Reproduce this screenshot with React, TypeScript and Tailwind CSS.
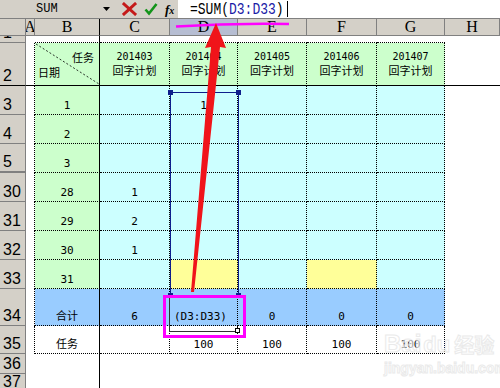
import clsx from 'clsx';

const GRID = 'grid grid-cols-[26px_9px_65px_70px_68px_69px_70px_68px_55px]';
const CELL_FONT = "font-['DejaVu_Sans_Mono','Noto_Sans_CJK_SC',monospace]";

type Kind = 'top' | 'head' | 'body' | 'total' | 'task' | 'empty';

type RowSpec = {
  n: string;
  h: string;
  kind: Kind;
  vals?: string[];
  yellow?: number[];
  gap?: boolean;
  active?: boolean;
};

const ROWS: RowSpec[] = [
  { n: '1', h: 'h-[7px]', kind: 'top' },
  { n: '2', h: 'h-[43px]', kind: 'head' },
  { n: '3', h: 'h-[29px]', kind: 'body', vals: ['1', '', '1', '', '', ''] },
  { n: '4', h: 'h-[29px]', kind: 'body', vals: ['2', '', '', '', '', ''] },
  { n: '5', h: 'h-[29px]', kind: 'body', vals: ['3', '', '', '', '', ''], gap: true },
  { n: '30', h: 'h-[29px]', kind: 'body', vals: ['28', '1', '', '', '', ''] },
  { n: '31', h: 'h-[29px]', kind: 'body', vals: ['29', '2', '', '', '', ''] },
  { n: '32', h: 'h-[29px]', kind: 'body', vals: ['30', '1', '', '', '', ''] },
  { n: '33', h: 'h-[29px]', kind: 'body', vals: ['31', '', '', '', '', ''], yellow: [2, 4] },
  { n: '34', h: 'h-[37px]', kind: 'total', vals: ['合计', '6', '(D3:D33)', '0', '0', '0'], active: true },
  { n: '35', h: 'h-[28px]', kind: 'task', vals: ['任务', '', '100', '100', '100', '100'] },
  { n: '36', h: 'h-[20px]', kind: 'empty' },
  { n: '37', h: 'flex-1', kind: 'empty' },
];

const MONTHS = ['201403', '201404', '201405', '201406', '201407'];

function FormulaBar() {
  return (
    <div className="h-[21px] flex bg-[#d4d0c8] border-b border-[#808080]">
      <div className="w-[118px] flex items-center justify-between pl-[36px] pr-[8px]">
        <span className="font-['Liberation_Mono',monospace] text-[12px] text-black">SUM</span>
        <svg width="7" height="4" viewBox="0 0 7 4">
          <path d="M0 0h7L3.5 4z" fill="#000" />
        </svg>
      </div>
      <div className="flex items-center gap-[7px] w-[60px] pl-[4px]">
        <svg width="15" height="14" viewBox="0 0 15 14">
          <path d="M2 2l11 10M13 2L2 12" stroke="#c41a1a" strokeWidth="3" strokeLinecap="square" />
        </svg>
        <svg width="14" height="14" viewBox="0 0 14 14">
          <path d="M1.5 7.5l3.5 4L12.5 2" stroke="#13941a" strokeWidth="2.6" fill="none" />
        </svg>
        <span className="font-['Liberation_Serif'] italic font-bold text-[13px] leading-none text-black">
          f<span className="text-[10px]">x</span>
        </span>
      </div>
      <div className="flex-1 bg-white flex items-center pl-[12px] font-['Liberation_Mono',monospace] text-[13px] leading-none">
        <span className="inline-block scale-y-[1.3]">
          <span className="text-black">=SUM(</span>
          <span className="text-[#1a1aa6]">D3:D33</span>
          <span className="text-black">)</span>
        </span>
        <span className="ml-[3px] w-px h-[16px] bg-black" />
      </div>
    </div>
  );
}

function ColHeader() {
  const letters = ['', 'A', 'B', 'C', 'D', 'E', 'F', 'G', 'H'];
  return (
    <div className={clsx(GRID, 'h-[21px] bg-[#d4d0c8]')}>
      {letters.map((l, i) => (
        <div
          key={i}
          className={clsx(
            "flex items-center justify-center border-r border-b border-[#808080] font-['Liberation_Serif'] text-[16px] leading-none text-black overflow-hidden",
            i === 2 && 'border-r-black',
            i === 4 && 'bg-[#b6bdd2] border-[#1f2a7a]'
          )}
        >
          {l}
        </div>
      ))}
    </div>
  );
}

function HeadCorner() {
  return (
    <>
      <svg className="absolute left-0 top-0" width="65" height="42" viewBox="0 0 65 42">
        <line x1="1" y1="1" x2="64" y2="41" stroke="#000" strokeWidth="0.8" strokeDasharray="2 2" />
      </svg>
      <span className="absolute right-[5px] top-[10px] text-[11px] leading-none whitespace-nowrap">任务</span>
      <span className="absolute left-[3px] top-[25px] text-[11px] leading-none whitespace-nowrap">日期</span>
    </>
  );
}

function Row({ r }: { r: RowSpec }) {
  const inTable = r.kind !== 'top' && r.kind !== 'empty';
  const isHead = r.kind === 'head';

  const cellBg = (ci: number) => {
    if (r.kind === 'head') return 'bg-[#ccffcc]';
    if (r.kind === 'body') {
      if (r.yellow?.includes(ci)) return 'bg-[#ffff99]';
      return ci === 0 ? 'bg-[#ccffcc]' : 'bg-[#ccffff]';
    }
    if (r.kind === 'total') return 'bg-[#99ccff]';
    return 'bg-white';
  };

  return (
    <div className={clsx(GRID, r.h, CELL_FONT, 'text-black')}>
      <div
        className={clsx(
          "flex items-end pl-[3px] pb-[1px] bg-[#d4d0c8] border-r border-b border-[#808080] font-['Liberation_Sans'] text-[16px] leading-none overflow-hidden",
          isHead && 'border-b-black',
          r.gap && 'border-b-2',
          r.active && 'bg-[#b6bdd2] border-[#1f2a7a]'
        )}
      >
        {r.n}
      </div>
      <div
        className={clsx(
          'bg-white',
          inTable && 'border-r border-dotted border-black',
          isHead && 'border-b [border-bottom-style:solid]'
        )}
      />
      {[0, 1, 2, 3, 4, 5].map((ci) => {
        const v = r.vals?.[ci] ?? '';
        return (
          <div
            key={ci}
            className={clsx(
              'relative flex text-[11px] leading-none overflow-hidden',
              inTable && ['border-r border-b border-dotted border-black', cellBg(ci)],
              r.kind === 'top' && 'border-b border-dotted border-black',
              ci === 0 && 'border-r border-r-black [border-right-style:solid]',
              isHead && '[border-bottom-style:solid]',
              isHead ? 'flex-col items-center justify-center gap-[4px]' : 'items-end pb-[3px]',
              r.kind === 'total' && ci === 2 ? 'justify-start pl-[4px] text-[10px]' : 'justify-center'
            )}
          >
            {isHead ? (
              ci === 0 ? (
                <HeadCorner />
              ) : (
                <>
                  <span className="text-[10px]">{MONTHS[ci - 1]}</span>
                  <span>回字计划</span>
                </>
              )
            ) : (
              v
            )}
          </div>
        );
      })}
      <div className={clsx('bg-white', isHead && 'border-b border-black')} />
    </div>
  );
}

function Overlays() {
  return (
    <>
      <div className="absolute left-[170px] top-[92px] w-[69px] h-[204px] border border-[#0f1f8c]" />
      <div className="absolute left-[168px] top-[90px] w-[5px] h-[5px] bg-[#0f1f8c]" />
      <div className="absolute left-[236px] top-[90px] w-[5px] h-[5px] bg-[#0f1f8c]" />
      <div className="absolute left-[168px] top-[293px] w-[5px] h-[5px] bg-[#0f1f8c]" />
      <div className="absolute left-[236px] top-[293px] w-[5px] h-[5px] bg-[#0f1f8c]" />
      <div className="absolute left-[169px] top-[296px] w-[70px] h-[36px] border-l border-b border-[#333]" />
      <div className="absolute left-[235px] top-[328px] w-[5px] h-[5px] bg-white border border-black" />
      <div className="absolute left-[163px] top-[295px] w-[83px] h-[43px] border-[3px] border-[#ff00ff]" />
      <svg className="absolute left-0 top-0 pointer-events-none" width="500" height="388" viewBox="0 0 500 388">
        <path d="M176 26.5 Q232 23 289 24" stroke="#ff00ff" strokeWidth="2.5" fill="none" />
        <polygon points="216,23 226,48 220,47 194,292 191,292 211,47 205,48" fill="#f0141a" />
      </svg>
      <div className="absolute left-[384px] top-[332px] flex flex-col items-start pointer-events-none opacity-70">
        <div className="flex items-end gap-[2px] font-['Liberation_Sans','Noto_Sans_CJK_SC',sans-serif] font-bold text-[24px] leading-none text-white [-webkit-text-stroke:1px_#e2e2e2]">
          <span>Bai</span>
          <span className="text-[22px]">du</span>
          <span className="text-[20px] ml-[2px]">经验</span>
        </div>
        <span className="mt-[5px] font-['Liberation_Sans'] font-bold text-[14px] leading-none text-white [-webkit-text-stroke:1px_#e2e2e2]">
          jingyan.baidu.com
        </span>
      </div>
    </>
  );
}

export default function App() {
  return (
    <div className="relative w-[500px] h-[388px] overflow-hidden bg-white flex flex-col">
      <FormulaBar />
      <ColHeader />
      <div className="flex-1 flex flex-col">
        {ROWS.map((r) => (
          <Row key={r.n} r={r} />
        ))}
      </div>
      <Overlays />
    </div>
  );
}
